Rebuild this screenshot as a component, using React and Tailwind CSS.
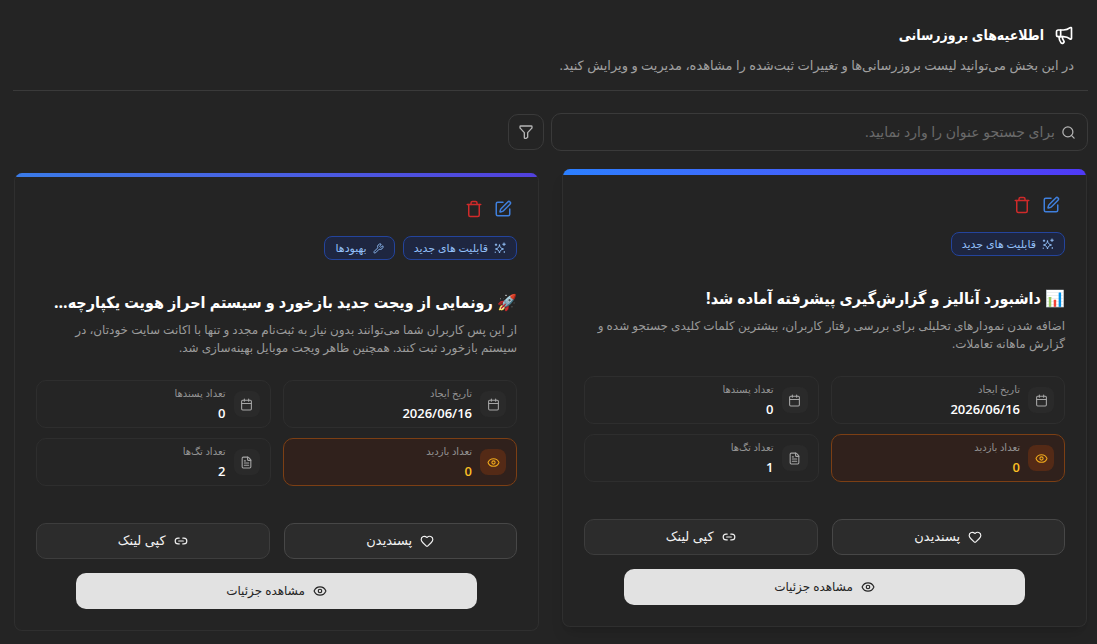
import React, { useState } from 'react';
import {
  Calendar,
  Eye,
  FileText,
  Heart,
  Link2,
  Megaphone,
  Search,
  SquarePen,
  Trash,
  Wrench,
} from 'lucide-react';

const updates = [
  {
    id: 1,
    title: '📊 داشبورد آنالیز و گزارش‌گیری پیشرفته آماده شد!',
    text: 'اضافه شدن نمودارهای تحلیلی برای بررسی رفتار کاربران، بیشترین کلمات کلیدی جستجو شده و گزارش ماهانه تعاملات.',
    badges: ['feature'],
    date: '2026/06/16',
    likes: 0,
    views: 0,
    tags: 1,
    active: true,
  },
  {
    id: 2,
    title: '🚀 رونمایی از ویجت جدید بازخورد و سیستم احراز هویت یکپارچه...',
    text: 'از این پس کاربران شما می‌توانند بدون نیاز به ثبت‌نام مجدد و تنها با اکانت سایت خودتان، در سیستم بازخورد ثبت کنند. همچنین ظاهر ویجت موبایل بهینه‌سازی شد.',
    badges: ['feature', 'improvement'],
    date: '2026/06/16',
    likes: 0,
    views: 0,
    tags: 2,
    active: false,
  },
];

function SparkleIcon() {
  return (
    <svg width="12" height="12" viewBox="0 0 24 24" fill="none" stroke="currentColor" strokeWidth="2" strokeLinecap="round" strokeLinejoin="round">
      <path d="M11 6c1 5 3 7 8 8-5 1-7 3-8 8-1-5-3-7-8-8 5-1 7-3 8-8z" />
      <path d="M20 2v5M17.500 4.500h5M4 4v3M2.500 5.500h3M20.500 19v2M2.500 20v1" />
    </svg>
  );
}

function FilterIcon() {
  return (
    <svg width="16" height="16" viewBox="0 0 24 24" fill="none" stroke="currentColor" strokeWidth="2" strokeLinecap="round" strokeLinejoin="round">
      <path d="M4 3h16a1 1 0 0 1 1 1v1.200a2 2 0 0 1-.6 1.400L14.500 13v7l-2 1.500h-2a1 1 0 0 1-1-1V13L3.600 6.600A2 2 0 0 1 3 5.200V4a1 1 0 0 1 1-1z" />
    </svg>
  );
}

function Badge({ type }) {
  return (
    <span className="flex h-6 items-center gap-1.5 rounded-lg border border-[#24449c] bg-[#1e2640] px-2.5 text-[11px] text-[#93c0f8]">
      {type === 'feature' ? <SparkleIcon /> : <Wrench size={11} />}
      {type === 'feature' ? 'قابلیت های جدید' : 'بهبودها'}
    </span>
  );
}

function Stat({ icon: Icon, label, value, highlight }) {
  return (
    <div
      className={
        highlight
          ? 'flex h-12 items-center gap-2 rounded-[10px] border border-[#7c3f14] bg-[#30211c] px-2.5'
          : 'flex h-12 items-center gap-2 rounded-[10px] border border-[#2e2e2e] bg-[#252525] px-2.5'
      }
    >
      <span
        className={
          highlight
            ? 'flex size-[26px] items-center justify-center rounded-lg bg-[#542a16] text-[#f0a91b]'
            : 'flex size-[26px] items-center justify-center rounded-lg bg-[#2a2a2a] text-[#a6a6a6]'
        }
      >
        <Icon size={13} />
      </span>
      <div className="flex flex-col gap-[3px] pb-0.5">
        <p className="text-[10px] leading-4 text-[#949494]">{label}</p>
        <p className={highlight ? 'text-[13px] leading-[18px] font-semibold text-[#fbbf24]' : 'text-[13px] leading-[18px] font-semibold text-white'}>
          {value}
        </p>
      </div>
    </div>
  );
}

function UpdateCard({ update }) {
  return (
    <article
      className={
        update.active
          ? 'flex -translate-y-1 flex-col overflow-hidden rounded-lg border border-t-0 border-[#2f2f2f] bg-[#242424] shadow-lg'
          : 'flex flex-col overflow-hidden rounded-lg border border-t-0 border-[#2f2f2f] bg-[#242424]'
      }
    >
      <div className="h-1.5">
        <div
          className={
            update.active
              ? 'h-1.5 bg-linear-to-r from-[#2b7fff] to-[#4f39f6]'
              : 'h-1 bg-linear-to-r from-[#3a7be8] to-[#5140dc]'
          }
        />
      </div>
      <div className="flex flex-col px-[21px] pt-[21px] pb-[21px]">
        <div className="flex gap-[11px] px-[5px]">
          <button type="button" aria-label="ویرایش" className="text-[#3f7fdc]">
            <SquarePen size={18} />
          </button>
          <button type="button" aria-label="حذف" className="text-[#cf2a2a]">
            <Trash size={18} />
          </button>
        </div>
        <div className="mt-[18px] flex gap-2">
          {update.badges.map((type) => (
            <Badge key={type} type={type} />
          ))}
        </div>
        <h2 className="mt-7 font-['Open_Sans','DejaVu_Sans_Condensed','DejaVu_Sans',sans-serif] text-base leading-7 font-bold whitespace-nowrap text-white">
          {update.title}
        </h2>
        <p className="mt-[5px] h-9 pe-2 text-xs leading-[18px] text-[#9b9b9b]">{update.text}</p>
        <div className="mt-[23px] grid grid-cols-2 gap-x-3 gap-y-2.5">
          <Stat icon={Calendar} label="تاریخ ایجاد" value={update.date} />
          <Stat icon={Calendar} label="تعداد پسندها" value={update.likes} />
          <Stat icon={Eye} label="تعداد بازدید" value={update.views} highlight />
          <Stat icon={FileText} label="تعداد تگ‌ها" value={update.tags} />
        </div>
        <div className="mt-[37px] grid grid-cols-2 gap-3.5 text-[13px] text-[#f1f1f1]">
          <button type="button" className="flex h-9 items-center justify-center gap-2 rounded-[10px] border border-[#474747] bg-[#2c2c2c]">
            <Heart size={14} />
            پسندیدن
          </button>
          <button type="button" className="flex h-9 items-center justify-center gap-2 rounded-[10px] border border-[#3d3d3d] bg-[#2c2c2c]">
            <Link2 size={14} />
            کپی لینک
          </button>
        </div>
        <button type="button" className="mt-3.5 flex h-9 w-5/6 items-center justify-center gap-2 self-center rounded-[10px] bg-[#e2e2e2] text-xs text-[#242424]">
          <Eye size={14} />
          مشاهده جزئیات
        </button>
      </div>
    </article>
  );
}

export default function App() {
  const [search, setSearch] = useState('');

  return (
    <main dir="rtl" className="min-h-screen bg-[#242424] pt-[21px] pr-[9px] pb-3 pl-[13px] font-['Open_Sans','DejaVu_Sans',sans-serif]">
      <header className="border-b border-[#3a3a3a] px-3.5 pb-[15px]">
        <h1 className="flex h-7 items-center gap-2.5 font-['Open_Sans','DejaVu_Sans_Condensed','DejaVu_Sans',sans-serif] text-sm font-bold text-white">
          <Megaphone size={20} />
          اطلاعیه‌های بروزرسانی
        </h1>
        <p className="mt-1.5 text-[13px] leading-5 text-[#a0a0a0]">
          در این بخش می‌توانید لیست بروزرسانی‌ها و تغییرات ثبت‌شده را مشاهده، مدیریت و ویرایش کنید.
        </p>
      </header>

      <div className="mt-[22px] flex items-center gap-[7px]">
        <label className="flex h-[38px] w-1/2 items-center gap-1.5 rounded-[10px] border border-[#3a3a3a] px-[11px] text-[#b4b4b4]">
          <Search size={15} />
          <input
            type="text"
            aria-label="جستجو"
            className="min-w-0 flex-1 bg-transparent text-sm text-white outline-none placeholder:text-[#6a6a6a]"
            placeholder="برای جستجو عنوان را وارد نمایید."
            value={search}
            onChange={(e) => setSearch(e.target.value)}
          />
        </label>
        <button type="button" aria-label="فیلتر" className="flex size-9 items-center justify-center rounded-[10px] border border-[#3a3a3a] text-[#b4b4b4]">
          <FilterIcon />
        </button>
      </div>

      <section className="mt-[22px] grid grid-cols-2 gap-[23px] px-px">
        {updates.map((update) => (
          <UpdateCard key={update.id} update={update} />
        ))}
      </section>
    </main>
  );
}
